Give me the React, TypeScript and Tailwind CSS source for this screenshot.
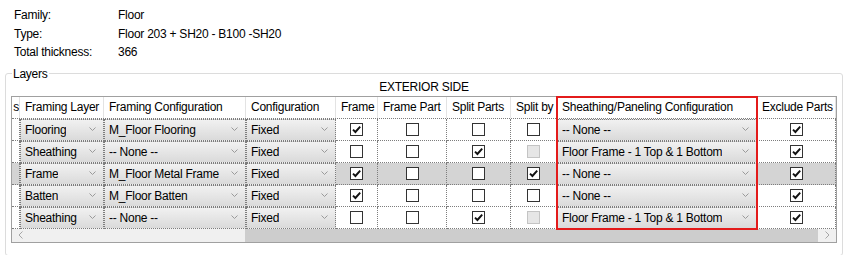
import React from 'react';

type SplitBy = 'on' | 'off' | 'disabled';

interface LayerRow {
  layer: string;
  framingConfig: string;
  frame: boolean;
  framePart: boolean;
  splitParts: boolean;
  splitBy: SplitBy;
  sheathing: string;
  exclude: boolean;
  selected?: boolean;
}

const rows: LayerRow[] = [
  { layer: 'Flooring', framingConfig: 'M_Floor Flooring', frame: true, framePart: false, splitParts: false, splitBy: 'off', sheathing: '-- None --', exclude: true },
  { layer: 'Sheathing', framingConfig: '-- None --', frame: false, framePart: false, splitParts: true, splitBy: 'disabled', sheathing: 'Floor Frame - 1 Top & 1 Bottom', exclude: true },
  { layer: 'Frame', framingConfig: 'M_Floor Metal Frame', frame: true, framePart: false, splitParts: false, splitBy: 'on', sheathing: '-- None --', exclude: true, selected: true },
  { layer: 'Batten', framingConfig: 'M_Floor Batten', frame: true, framePart: false, splitParts: false, splitBy: 'off', sheathing: '-- None --', exclude: true },
  { layer: 'Sheathing', framingConfig: '-- None --', frame: false, framePart: false, splitParts: true, splitBy: 'disabled', sheathing: 'Floor Frame - 1 Top & 1 Bottom', exclude: true },
];

const headers = ['s', 'Framing Layer', 'Framing Configuration', 'Configuration', 'Frame', 'Frame Part', 'Split Parts', 'Split by', 'Sheathing/Paneling Configuration', 'Exclude Parts'];

const gridCols = 'grid grid-cols-[8px_84px_142px_90px_42px_69px_64px_46px_200px_79px]';

const Chevron = () => (
  <svg width="7" height="5" viewBox="0 0 7 5" className="shrink-0">
    <polyline points="0.5,0.5 3.5,3.5 6.5,0.5" fill="none" stroke="#9a9a9a" strokeWidth="1" />
  </svg>
);

const Dropdown = ({ value }: { value: string }) => (
  <div className="h-[22px] border border-dotted border-[#7d7d7d] bg-gradient-to-b from-[#f1f1f1] to-[#dadada] flex items-center justify-between pl-[4px] pr-[7px] overflow-hidden">
    <span className="whitespace-nowrap truncate">{value}</span>
    <Chevron />
  </div>
);

const Checkbox = ({ state }: { state: 'on' | 'off' | 'disabled' }) => {
  if (state === 'disabled') {
    return <div className="w-[13px] h-[13px] border border-[#c4c4c4] bg-[#e6e6e6]" />;
  }
  return (
    <div className="w-[13px] h-[13px] border border-[#333333] bg-white flex items-center justify-center">
      {state === 'on' && (
        <svg width="11" height="11" viewBox="0 0 11 11">
          <path d="M2 5.6 L4.4 8 L9.2 2.6" fill="none" stroke="#111" strokeWidth="1.9" />
        </svg>
      )}
    </div>
  );
};

const CheckCell = ({ state, selected }: { state: 'on' | 'off' | 'disabled'; selected?: boolean }) => (
  <div className={`h-[22px] border-r border-b border-dotted border-[#7d7d7d] flex items-center justify-center ${selected ? 'bg-[#d4d4d4]' : 'bg-white'}`}>
    <Checkbox state={state} />
  </div>
);

const ScrollArrow = ({ dir }: { dir: 'left' | 'right' }) => (
  <svg width="5" height="8" viewBox="0 0 5 8">
    <polyline
      points={dir === 'left' ? '4.5,0.5 1,4 4.5,7.5' : '0.5,0.5 4,4 0.5,7.5'}
      fill="none"
      stroke="#a6a6a6"
      strokeWidth="1"
    />
  </svg>
);

export default function App() {
  return (
    <div className="w-[845px] h-[255px] bg-white text-[12px] tracking-[-0.25px] text-black overflow-hidden" style={{ fontFamily: '"Liberation Sans", Arial, sans-serif' }}>
      {/* Type info */}
      <div className="pt-[6px] pl-[14px] grid grid-cols-[104px_1fr]">
        <div className="h-[18.5px] leading-[18px]">Family:</div>
        <div className="h-[18.5px] leading-[18px]">Floor</div>
        <div className="h-[18.5px] leading-[18px]">Type:</div>
        <div className="h-[18.5px] leading-[18px]">Floor 203 + SH20 - B100 -SH20</div>
        <div className="h-[18.5px] leading-[18px]">Total thickness:</div>
        <div className="h-[18.5px] leading-[18px]">366</div>
      </div>

      {/* Layers group */}
      <fieldset className="ml-[5px] mt-[5px] w-[838px] border border-[#dcdcdc] rounded-[3px] px-[5px] pb-[12px]">
        <legend className="ml-[1px] px-[1px] leading-[14px]">Layers</legend>

        <div className="h-[13px] leading-[13px] text-center mb-[2px]">EXTERIOR SIDE</div>

        <div className="relative w-[826px] border border-[#a0a0a0]">
          {/* Header */}
          <div className={`${gridCols} h-[22px] border-b border-dotted border-[#7d7d7d]`}>
            {headers.map((h, i) => (
              <div
                key={i}
                className={`flex items-center whitespace-nowrap overflow-hidden border-r border-[#e3e3e3] ${i === 0 ? 'justify-end' : 'pl-[5px]'}`}
              >
                {h}
              </div>
            ))}
          </div>

          {/* Rows */}
          {rows.map((r, i) => (
            <div key={i} className={gridCols}>
              <div className={`h-[22px] border-r border-b border-dotted border-[#7d7d7d] ${r.selected ? 'bg-[#d4d4d4]' : 'bg-white'}`} />
              <Dropdown value={r.layer} />
              <Dropdown value={r.framingConfig} />
              <Dropdown value="Fixed" />
              <CheckCell state={r.frame ? 'on' : 'off'} selected={r.selected} />
              <CheckCell state={r.framePart ? 'on' : 'off'} selected={r.selected} />
              <CheckCell state={r.splitParts ? 'on' : 'off'} selected={r.selected} />
              <CheckCell state={r.splitBy} selected={r.selected} />
              <Dropdown value={r.sheathing} />
              <CheckCell state={r.exclude ? 'on' : 'off'} selected={r.selected} />
            </div>
          ))}

          {/* Horizontal scrollbar */}
          <div className="flex h-[13px] bg-[#f0f0f0]">
            <div className="w-[17px] flex items-center justify-center">
              <ScrollArrow dir="left" />
            </div>
            <div className="w-[216px]" />
            <div className="w-[573px] bg-[#cdcdcd]" />
            <div className="flex-1 flex items-center justify-center">
              <ScrollArrow dir="right" />
            </div>
          </div>

          {/* Highlight annotation */}
          <div className="absolute left-[544px] -top-[1px] w-[202px] h-[134px] border-2 border-[#e31b1b] pointer-events-none" />
        </div>
      </fieldset>
    </div>
  );
}
